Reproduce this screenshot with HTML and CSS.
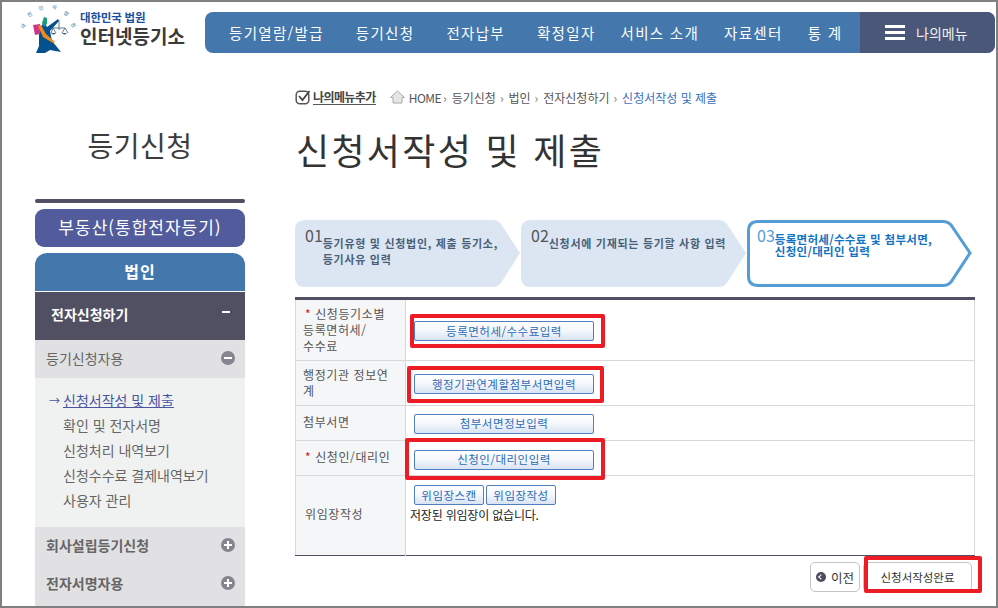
FILE: index.html
```html
<!DOCTYPE html>
<html lang="ko">
<head>
  <meta charset="UTF-8">
  <title>인터넷등기소 - 신청서작성 및 제출</title>
  <link rel="stylesheet" href="styles.css">
</head>
<body>
<div class="page">
  <header class="top">
    <a class="logo" href="#">
      <svg class="logo-mark" width="56" height="52" viewBox="22 3 56 52">
        <g class="arc-text">
          <text transform="translate(25 27) rotate(-60)">대</text>
          <text transform="translate(31 16) rotate(-35)">한</text>
          <text transform="translate(41 10) rotate(-8)">민</text>
          <text transform="translate(54 9) rotate(15)">국</text>
          <text transform="translate(65 15) rotate(38)">법</text>
          <text transform="translate(72 26) rotate(60)">원</text>
        </g>
        <path d="M44 22 L47 27 L54 22 L58 19 L59 21 L50 31 L52 41 L61 52 L50 50 L45 53 L36 53 L39 46 L39 30 Z" fill="#05508f"/>
        <path d="M33 25 L40 24 L40 34 L35 35 Z" fill="#d2348c"/>
        <path d="M38 26 L41 25 L46 34 L55 42 L53 43 L43 37 Z" fill="#ef8a1d"/>
        <path d="M42 23 L44 17 L47 18 L47 24 L44 27 Z" fill="#1d9a78"/>
        <path d="M53 28 H65 M59 20 V30 M53 28 L51 33 M53 28 L56 33 M65 28 L62 33 M65 28 L68 33" stroke="#3b5f86" stroke-width=".8" fill="none"/>
        <path d="M51 33 H56 Q53.5 36 51 33 Z M62 33 H67 Q64.5 36 62 33 Z" fill="#3b5f86"/>
      </svg>
      <span class="logo-text">
        <span class="logo-sub">대한민국 법원</span>
        <span class="logo-main">인터넷등기소</span>
      </span>
    </a>
    <nav class="gnb">
      <ul class="gnb-list">
        <li class="wide">등기열람/발급</li>
        <li class="wide">등기신청</li>
        <li class="wide">전자납부</li>
        <li>확정일자</li>
        <li>서비스 소개</li>
        <li>자료센터</li>
        <li>통 계</li>
      </ul>
      <a class="my-menu" href="#"><span class="burger"></span>나의메뉴</a>
    </nav>
  </header>

  <div class="layout">
    <aside class="side">
      <h2 class="side-title">등기신청</h2>
      <div class="side-bar"></div>
      <a class="cat cat-estate" href="#">부동산(통합전자등기)</a>
      <a class="cat cat-corp" href="#">법인</a>
      <div class="sec-dark">전자신청하기<span class="dash"></span></div>
      <div class="sec-row">등기신청자용<span class="toggle"></span></div>
      <ul class="sub-list">
        <li class="active">신청서작성 및 제출</li>
        <li>확인 및 전자서명</li>
        <li>신청처리 내역보기</li>
        <li>신청수수료 결제내역보기</li>
        <li>사용자 관리</li>
      </ul>
      <div class="sec-row sec-bold">회사설립등기신청<span class="toggle plus"></span></div>
      <div class="sec-row sec-bold sec-last">전자서명자용<span class="toggle plus"></span></div>
    </aside>

    <main class="main">
      <div class="crumbs">
        <svg class="ico-check" width="16" height="16" viewBox="0 0 16 16">
          <rect x="1.2" y="2.2" width="12.6" height="12.6" rx="3.5" fill="none" stroke="#555" stroke-width="1.5"/>
          <path d="M4 7 L7.5 11 L14.5 2" fill="none" stroke="#444" stroke-width="1.8"/>
        </svg>
        <a class="add-menu" href="#">나의메뉴추가</a>
        <svg class="ico-home" width="15" height="14" viewBox="0 0 15 14">
          <path d="M7.5 1 L14.5 7.5 H12 V13 H3 V7.5 H.5 Z" fill="#e6e6e6" stroke="#aaa"/>
        </svg>
        <span class="home">HOME</span><i>›</i><span>등기신청</span><i>›</i><span>법인</span><i>›</i><span>전자신청하기</span><i>›</i><span class="here">신청서작성 및 제출</span>
      </div>

      <h1 class="page-title">신청서작성 및 제출</h1>

      <ol class="steps">
        <li class="step">
          <svg class="step-bg" width="225" height="67" viewBox="0 0 225 67"><path d="M10 0 H198 Q203 0 206 4 L225 33 L206 63 Q203 67 198 67 H10 Q0 67 0 57 V10 Q0 0 10 0 Z" fill="#dbe6f2"/></svg>
          <b>01</b><span>등기유형 및 신청법인, 제출 등기소,<br>등기사유 입력</span>
        </li>
        <li class="step">
          <svg class="step-bg" width="225" height="67" viewBox="0 0 225 67"><path d="M10 0 H198 Q203 0 206 4 L225 33 L206 63 Q203 67 198 67 H10 Q0 67 0 57 V10 Q0 0 10 0 Z" fill="#dbe6f2"/></svg>
          <b>02</b><span>신청서에 기재되는 등기할 사항 입력</span>
        </li>
        <li class="step step-on">
          <svg class="step-bg" width="225" height="67" viewBox="0 0 225 67"><path d="M11 1.5 H196 Q201 1.5 204 5 L223 33 L204 62 Q201 65.5 196 65.5 H11 Q1.5 65.5 1.5 56 V11 Q1.5 1.5 11 1.5 Z" fill="#fff" stroke="#559dd6" stroke-width="3"/></svg>
          <b>03</b><span>등록면허세/수수료 및 첨부서면,<br>신청인/대리인 입력</span>
        </li>
      </ol>

      <table class="form">
        <tr class="r1">
          <th><em>*</em> 신청등기소별<br>등록면허세/<br>수수료</th>
          <td><button class="btn btn-long">등록면허세/수수료입력</button></td>
        </tr>
        <tr class="r2">
          <th>행정기관 정보연<br>계</th>
          <td><button class="btn btn-long">행정기관연계할첨부서면입력</button></td>
        </tr>
        <tr class="r3">
          <th>첨부서면</th>
          <td><button class="btn btn-long">첨부서면정보입력</button></td>
        </tr>
        <tr class="r4">
          <th><em>*</em> 신청인/대리인</th>
          <td><button class="btn btn-long">신청인/대리인입력</button></td>
        </tr>
        <tr class="r5">
          <th>위임장작성</th>
          <td>
            <div class="btn-pair"><button class="btn btn-short">위임장스캔</button><button class="btn btn-short">위임장작성</button></div>
            <p class="note">저장된 위임장이 없습니다.</p>
          </td>
        </tr>
      </table>

      <div class="actions">
        <button class="act act-prev"><span class="back"></span>이전</button>
        <button class="act act-done">신청서작성완료</button>
      </div>
    </main>
  </div>

  <!-- 빨간 표시 -->
  <div class="mark mark-1"></div>
  <div class="mark mark-2"></div>
  <div class="mark mark-3"></div>
  <div class="mark mark-4"></div>
</div>
</body>
</html>
```

FILE: styles.css
```css
* {
  box-sizing: border-box;
}
html, body {
  margin: 0;
  padding: 0;
}
body {
  font-family: "Noto Sans CJK KR", "Noto Sans", sans-serif;
  background: #fff;
  color: #333;
}
a {
  color: inherit;
  text-decoration: none;
}
ul, ol {
  list-style: none;
  margin: 0;
  padding: 0;
}
.page {
  position: relative;
  width: 998px;
  height: 608px;
  border: 2px solid #808080;
  overflow: hidden;
}

/* top */
.top {
  display: flex;
  height: 51px;
  padding-top: 10px;
}
.logo {
  display: flex;
  width: 203px;
  margin-top: -9px;
  padding-left: 20px;
}
.logo-mark {
  flex: none;
  overflow: visible;
}
.logo-text {
  display: flex;
  flex-direction: column;
  margin-left: 2px;
  padding-top: 6px;
}
.logo-sub {
  font-size: 11.5px;
  line-height: 16px;
  font-weight: bold;
  color: #1c4f9c;
  letter-spacing: -0.2px;
}
.logo-main {
  font-size: 19px;
  line-height: 22px;
  font-weight: bold;
  color: #3a3a3a;
}
.arc-text text {
  font-size: 5px;
  fill: #1f6a8f;
  text-anchor: middle;
}
.gnb {
  display: flex;
  width: 790px;
  height: 41px;
  background: #4478ad;
  border-radius: 8px;
  overflow: hidden;
}
.gnb-list {
  display: flex;
  flex: 1;
  align-items: center;
  gap: 25px;
  padding-left: 24px;
  font-size: 14.5px;
  letter-spacing: 1.3px;
  color: #fff;
  white-space: nowrap;
}
.gnb-list .wide {
  margin-right: 7px;
}
.my-menu {
  display: flex;
  align-items: center;
  width: 135px;
  padding-left: 25px;
  background: #4a5778;
  color: #f0f0f0;
  font-size: 14px;
}
.burger {
  width: 20px;
  height: 15px;
  margin-right: 11px;
  border-top: 3px solid #fff;
  border-bottom: 3px solid #fff;
  position: relative;
}
.burger::before {
  content: "";
  position: absolute;
  left: 0;
  right: 0;
  top: 3px;
  height: 3px;
  background: #fff;
}

.layout {
  display: flex;
  gap: 50px;
  padding-left: 33px;
}

/* side menu */
.side {
  width: 210px;
  flex: none;
}
.side-title {
  margin: 0;
  padding-top: 74px;
  height: 146px;
  font-size: 28px;
  line-height: 36px;
  font-weight: normal;
  text-align: center;
  letter-spacing: 0.5px;
  color: #3c3c3c;
}
.side-bar {
  height: 4px;
  margin-bottom: 6px;
  background: #514f62;
  border-radius: 2px;
}
.cat {
  display: block;
  color: #fff;
  text-align: center;
  font-size: 17px;
  line-height: 36px;
  letter-spacing: 1px;
}
.cat-estate {
  height: 38px;
  margin-bottom: 6px;
  background: #525b9c;
  border-radius: 9px;
}
.cat-corp {
  height: 38px;
  margin-bottom: 1px;
  background: #4478ad;
  border-radius: 12px 12px 0 0;
  font-size: 16px;
  font-weight: bold;
}
.sec-dark {
  display: flex;
  justify-content: space-between;
  align-items: center;
  height: 48px;
  padding: 0 15px 4px 16px;
  background: #514f62;
  color: #fff;
  font-size: 14px;
  font-weight: bold;
}
.dash {
  width: 8px;
  height: 2px;
  margin-bottom: 4px;
  background: #fff;
}
.sec-row {
  display: flex;
  justify-content: space-between;
  align-items: center;
  height: 38px;
  padding: 0 10px 3px 11px;
  background: #e1e1e3;
  color: #666;
  font-size: 14px;
}
.sec-bold {
  font-weight: bold;
}
.sec-last {
  height: 41px;
  padding-bottom: 6px;
}
.toggle {
  position: relative;
  width: 14px;
  height: 14px;
  background: #85848f;
  border-radius: 50%;
}
.toggle::before {
  content: "";
  position: absolute;
  left: 3px;
  top: 6px;
  width: 8px;
  height: 2px;
  background: #fff;
}
.toggle.plus::after {
  content: "";
  position: absolute;
  left: 6px;
  top: 3px;
  width: 2px;
  height: 8px;
  background: #fff;
}
.sub-list {
  height: 149px;
  padding: 10px 0 0 28px;
  background: #f0f2f2;
  color: #666;
  font-size: 14px;
  line-height: 25px;
}
.sub-list .active {
  position: relative;
  color: #4a55a0;
  text-decoration: underline;
}
.sub-list .active::before {
  content: "→";
  position: absolute;
  left: -14px;
  font-size: 11px;
}

/* content */
.main {
  width: 680px;
  flex: none;
}
.crumbs {
  display: flex;
  align-items: center;
  height: 16px;
  margin-top: 36px;
  font-size: 12px;
  color: #555;
  white-space: nowrap;
}
.crumbs i {
  margin: 0 5px 0 4px;
  font-style: normal;
  color: #777;
}
.crumbs .home {
  margin-right: -2px;
  letter-spacing: -0.5px;
}
.ico-check {
  margin-right: 2px;
}
.add-menu {
  color: #444;
  border-bottom: 1px solid #555;
  line-height: 14px;
  font-weight: bold;
  letter-spacing: -0.6px;
}
.ico-home {
  margin: 0 4px 0 14px;
}
.crumbs .here {
  color: #3a6fc0;
}
.page-title {
  margin: 22px 0 0;
  height: 44px;
  padding-left: 1px;
  font-size: 36px;
  line-height: 44px;
  font-weight: normal;
  color: #333;
  letter-spacing: 2.3px;
}
.steps {
  display: flex;
  gap: 1px;
  margin-top: 49px;
  height: 67px;
}
.step {
  position: relative;
  display: flex;
  width: 225px;
  padding: 5px 0 0 10px;
  color: #4a6079;
}
.step-on {
  color: #1273c4;
}
.step-bg {
  position: absolute;
  left: 0;
  top: 0;
}
.step b {
  position: relative;
  font-size: 16px;
  font-weight: normal;
  line-height: 20px;
  color: #555;
}
.step span {
  position: relative;
  margin: 10px 0 0 0;
  font-size: 11px;
  line-height: 16px;
  font-weight: bold;
  letter-spacing: 0.7px;
  white-space: nowrap;
}
.step-on b {
  color: #559dd6;
}
.step-on span {
  margin: 8px 0 0 0;
  font-size: 11.5px;
  line-height: 12px;
  letter-spacing: 0.3px;
}
.form {
  width: 680px;
  margin-top: 10px;
  border-collapse: collapse;
  table-layout: fixed;
  border-top: 3px solid #514f62;
  border-bottom: 1px solid #514f62;
  border-left: 1px solid #d8d8d8;
  border-right: 1px solid #d8d8d8;
}
.form th, .form td {
  padding: 0;
  border-bottom: 1px solid #d8d8d8;
}
.form tr:last-child th, .form tr:last-child td {
  border-bottom: 0;
}
.form th {
  width: 110px;
  padding-left: 7px;
  background: #f5f6f8;
  border-right: 1px solid #d8d8d8;
  font-size: 12px;
  line-height: 16px;
  font-weight: normal;
  text-align: left;
  color: #555;
  letter-spacing: 0.6px;
}
.form th em {
  color: #e01010;
  font-style: normal;
  margin-left: 2px;
}
.form td {
  padding-left: 8px;
}
.r1 { height: 62px; }
.r2 { height: 45px; }
.r3 { height: 35px; }
.r4 { height: 35px; }
.r5 { height: 80px; }
.r1 td { padding-top: 2px; }
.r2 td { padding-top: 2px; }
.r3 td { padding-top: 1px; }
.r4 td { padding-top: 3px; }
.r3 th { padding-bottom: 2px; }
.r4 th { padding-bottom: 3px; }
.r5 th { padding: 0 0 4px 9px; }
.btn {
  height: 20px;
  padding: 0;
  background: linear-gradient(#fff, #f6f8fc 45%, #d9e3f2);
  border: 1px solid #4f7fc0;
  border-radius: 2px;
  font-family: inherit;
  font-size: 11.5px;
  line-height: 17px;
  color: #2c6cb8;
  letter-spacing: 0.5px;
}
.btn-long {
  display: block;
  width: 180px;
}
.btn-short {
  width: 70px;
}
.btn-pair {
  display: flex;
  gap: 2px;
}
.r5 td {
  vertical-align: top;
  padding: 9px 0 0 8px;
}
.note {
  margin: 1px 0 0 -4px;
  font-size: 12px;
  line-height: 18px;
  letter-spacing: -0.2px;
  color: #222;
}
.actions {
  display: flex;
  justify-content: flex-end;
  gap: 3px;
  margin-top: 6px;
  padding-right: 3px;
}
.act {
  display: flex;
  align-items: center;
  justify-content: center;
  height: 30px;
  padding: 0;
  background: #fff;
  border: 1px solid #c4c4c4;
  border-radius: 5px;
  font-family: inherit;
  font-size: 11.5px;
  color: #333;
}
.act-prev {
  width: 50px;
  font-size: 12.5px;
}
.act-done {
  width: 109px;
}
.back {
  position: relative;
  width: 10px;
  height: 10px;
  margin-right: 5px;
  background: #4d4c5e;
  border-radius: 50%;
}
.back::before {
  content: "";
  position: absolute;
  left: 3.5px;
  top: 3px;
  width: 3px;
  height: 3px;
  border-left: 1.5px solid #fff;
  border-bottom: 1.5px solid #fff;
  transform: rotate(45deg);
}

/* red annotation boxes */
.mark {
  position: absolute;
  border: 4px solid #ed1c24;
  border-radius: 2px;
}
.mark-1 { left: 408px; top: 312px; width: 195px; height: 34px; }
.mark-2 { left: 405px; top: 364px; width: 197px; height: 37px; }
.mark-3 { left: 403px; top: 436px; width: 200px; height: 42px; }
.mark-4 { left: 862px; top: 554px; width: 118px; height: 37px; }
```
